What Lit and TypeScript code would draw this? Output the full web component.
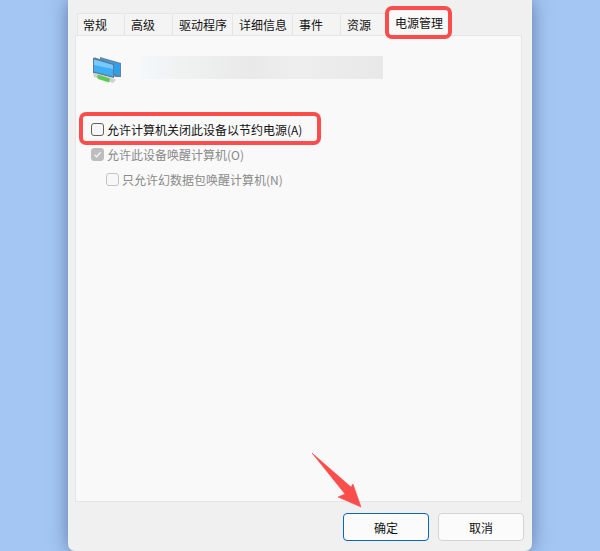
import { LitElement, html, css } from "lit";
import { customElement } from "lit/decorators.js";

@customElement("app-root")
export class AppRoot extends LitElement {
  static styles = css`
    :host {
      display: block;
      position: relative;
      width: 600px;
      height: 551px;
      overflow: hidden;
      background: #a3c6f2;
      font-family: "Noto Sans CJK SC", "Liberation Sans", sans-serif;
      font-size: 12px;
      color: #111;
    }
    .dialog {
      box-sizing: border-box;
      width: 464px;
      height: 551px;
      margin-left: 68px;
      padding: 13px 10px 10px 7px;
      background: #f0f0f0;
      border-radius: 0 0 7px 7px;
      box-shadow: 0 0 18px rgba(30, 50, 90, 0.5);
      display: flex;
      flex-direction: column;
    }
    .tabs {
      display: flex;
      height: 22px;
      padding-left: 2px;
      position: relative;
    }
    .tab {
      box-sizing: border-box;
      height: 22px;
      padding-left: 6px;
      line-height: 21px;
      background: #f4f4f4;
      border: 1px solid #e6e6e6;
      border-bottom: none;
      border-left: none;
      flex: none;
    }
    .tab.first {
      border-left: 1px solid #e6e6e6;
      padding-left: 5px;
    }
    .tab.active {
      background: #f9f9f9;
      height: 24px;
      margin-top: -2px;
      border: none;
      padding-left: 6px;
      line-height: 23px;
    }
    .panel {
      box-sizing: border-box;
      width: 447px;
      height: 467px;
      background: #f9f9f9;
      border: 1px solid #e5e5e5;
      padding: 18px 0 0 3px;
    }
    .head {
      display: flex;
      align-items: flex-start;
      height: 23px;
      margin-left: 14px;
    }
    .icon {
      width: 30px;
      height: 30px;
      margin-top: 2px;
      flex: none;
    }
    .strip {
      width: 242px;
      height: 23px;
      margin-left: 18px;
      margin-top: 2px;
      background: linear-gradient(90deg, #f3f8fb 0%, #f0f1f1 18%, #e9e9e9 45%, #eeeeee 65%, #e8e8e8 100%);
    }
    .options {
      margin-top: 40px;
      display: flex;
      flex-direction: column;
    }
    .row {
      display: flex;
      align-items: center;
      height: 25px;
      gap: 3px;
    }
    .row.sub {
      padding-left: 15px;
    }
    .row.off {
      color: #8a8a8a;
    }
    .box {
      box-sizing: border-box;
      width: 13px;
      height: 13px;
      border-radius: 3px;
      border: 1px solid #5f5f5f;
      background: #f7f7f7;
      flex: none;
      display: flex;
      margin-left: 12px;
    }
    .row.off .box {
      border-color: #c4c4c4;
    }
    .row.off .box.checked {
      background: #bdbdbd;
      border-color: #bdbdbd;
    }
    .box svg {
      width: 11px;
      height: 11px;
    }
    .footer {
      display: flex;
      justify-content: flex-end;
      gap: 9px;
      margin-top: 11px;
      margin-right: -2px;
    }
    .btn {
      box-sizing: border-box;
      width: 86px;
      height: 28px;
      border-radius: 4px;
      background: #fbfbfb;
      border: 1px solid #d4d4d4;
      display: flex;
      align-items: center;
      justify-content: center;
      color: #111;
    }
    .btn.primary {
      border-color: #0a67b8;
    }
    .mark {
      position: absolute;
      box-sizing: border-box;
      border: 4px solid #fb4d4b;
      border-radius: 7px;
    }
    .mark.tabmark {
      left: 385px;
      top: 6px;
      width: 67px;
      height: 33px;
    }
    .mark.rowmark {
      left: 79px;
      top: 112px;
      width: 242px;
      height: 33px;
    }
    .arrow {
      position: absolute;
      left: 305px;
      top: 448px;
      width: 60px;
      height: 62px;
    }
  `;

  render() {
    return html`
      <div class="dialog">
        <div class="tabs">
          <div class="tab first" style="width:48px">常规</div>
          <div class="tab" style="width:48px">高级</div>
          <div class="tab" style="width:60px">驱动程序</div>
          <div class="tab" style="width:60px">详细信息</div>
          <div class="tab" style="width:48px">事件</div>
          <div class="tab" style="width:48px">资源</div>
          <div class="tab active" style="width:62px">电源管理</div>
        </div>
        <div class="panel">
          <div class="head">
            <svg class="icon" viewBox="0 0 30 30">
              <path d="M7 1 L28 7 V21 L23 21 L7 16 Z" fill="#64839f" />
              <path d="M8 2.5 L27 8 V19.5 L8 14 Z" fill="#2f9fea" />
              <path d="M0 2 L2 1.5 L21 8 V22 L0 17 Z" fill="#5c7b97" />
              <path d="M1 3.5 L20 9 V20.5 L1 15.5 Z" fill="#3eaef5" />
              <path d="M1 3.5 L20 9 V13 L1 9 Z" fill="#79c9fa" />
              <path d="M0 17 L4 17.5 L19 22 L23 24 L20 27 L1 21 Z" fill="#cdd3d2" />
              <path d="M4 19.5 L6 19 L17 22.5 L16 26.5 L5 23 Z" fill="#5fc951" />
            </svg>
            <div class="strip"></div>
          </div>
          <div class="options">
            <div class="row"><span class="box"></span><span>允许计算机关闭此设备以节约电源(A)</span></div>
            <div class="row off">
              <span class="box checked">
                <svg viewBox="0 0 11 11"><path d="M2.5 5.7 L4.6 7.8 L8.6 3.2" fill="none" stroke="#f4f4f4" stroke-width="1.3" /></svg>
              </span>
              <span>允许此设备唤醒计算机(O)</span>
            </div>
            <div class="row sub off"><span class="box"></span><span>只允许幻数据包唤醒计算机(N)</span></div>
          </div>
        </div>
        <div class="footer">
          <div class="btn primary">确定</div>
          <div class="btn">取消</div>
        </div>
      </div>
      <div class="mark tabmark"></div>
      <div class="mark rowmark"></div>
      <svg class="arrow" viewBox="305 448 60 62">
        <path d="M312 453 L351 487 L353 484 L361 507 L338 497 L345 494 Z" fill="#fb4d4b" stroke="#fb4d4b" stroke-linejoin="round" stroke-width="0.6"/>
      </svg>
    `;
  }
}
